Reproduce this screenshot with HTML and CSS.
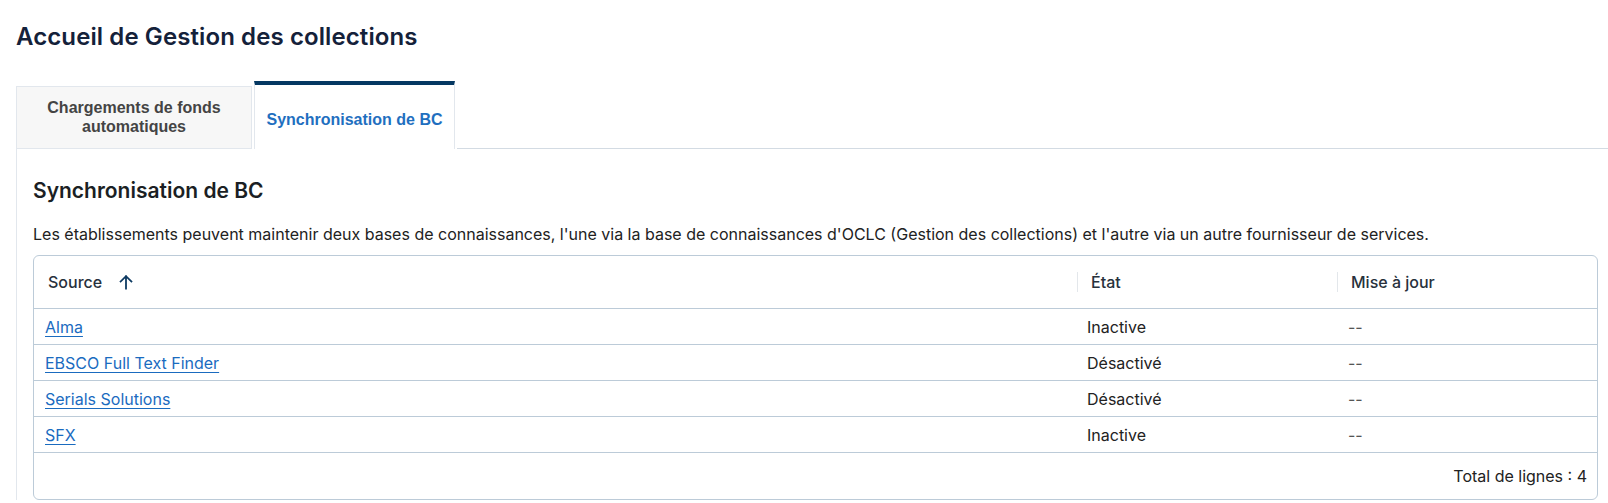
FILE: index.html
```html
<!DOCTYPE html>
<html lang="fr">
<head>
<meta charset="utf-8">
<title>Accueil de Gestion des collections</title>
<link rel="stylesheet" href="styles.css">
</head>
<body>
<div class="page">
  <h1 class="page-title">Accueil de Gestion des collections</h1>
  <div class="tabs">
    <div class="tab">Chargements de fonds<br>automatiques</div>
    <div class="tab tab-active">Synchronisation de BC</div>
    <div class="tabs-fill"></div>
  </div>
  <div class="panel">
    <h2 class="panel-title">Synchronisation de BC</h2>
    <p class="panel-text">Les établissements peuvent maintenir deux bases de connaissances, l'une via la base de connaissances d'OCLC (Gestion des collections) et l'autre via un autre fournisseur de services.</p>
    <div class="grid">
      <table class="grid-table">
        <colgroup>
          <col class="col-source">
          <col class="col-state">
          <col class="col-date">
        </colgroup>
        <thead>
          <tr>
            <th><div class="th-in th-first">Source
              <svg class="sort-icon" viewBox="0 0 16 16" width="16" height="16" aria-hidden="true"><path d="M8 14.5V2.2M2.6 7.6L8 2.2l5.4 5.4" fill="none" stroke="#0d3a62" stroke-width="1.8" stroke-linecap="square"/></svg>
            </div></th>
            <th><div class="th-in">État</div></th>
            <th><div class="th-in">Mise à jour</div></th>
          </tr>
        </thead>
        <tbody>
          <tr><td><a href="#">Alma</a></td><td>Inactive</td><td class="dash">--</td></tr>
          <tr><td><a href="#">EBSCO Full Text Finder</a></td><td>Désactivé</td><td class="dash">--</td></tr>
          <tr><td><a href="#">Serials Solutions</a></td><td>Désactivé</td><td class="dash">--</td></tr>
          <tr><td><a href="#">SFX</a></td><td>Inactive</td><td class="dash">--</td></tr>
        </tbody>
      </table>
      <div class="grid-footer">Total de lignes : 4</div>
    </div>
  </div>
</div>
</body>
</html>
```

FILE: styles.css
```css
html, body {
  margin: 0;
  padding: 0;
  background: #ffffff;
  overflow: hidden;
}

body {
  font-family: Inter, "Noto Sans", sans-serif;
  color: #222222;
}

.page {
  padding-left: 16px;
}

.page-title {
  margin: 21px 0 0 0;
  font-size: 24px;
  line-height: 32px;
  font-weight: 600;
  letter-spacing: 0.1px;
  color: #14213a;
}

.tabs {
  display: flex;
  align-items: flex-end;
  margin-top: 28px;
  gap: 2px;
}

.tab {
  box-sizing: border-box;
  height: 63px;
  width: 236px;
  display: flex;
  align-items: center;
  justify-content: center;
  text-align: center;
  font-family: "Liberation Sans", Arial, sans-serif;
  font-weight: 700;
  font-size: 16px;
  line-height: 19px;
  color: #444444;
  background: #f7f7f7;
  border: 1px solid #e2e7ed;
  padding-bottom: 2px;
}

.tab-active {
  width: 201px;
  height: 68px;
  background: #ffffff;
  color: #1f6fbf;
  border-top: 4px solid #053862;
  border-bottom: none;
  padding-top: 4px;
  padding-bottom: 0;
}

.tabs-fill {
  flex: 1;
  border-bottom: 1px solid #d3dbe3;
}

.panel {
  border-left: 1px solid #e2e7ed;
  padding: 28px 10px 0 16px;
}

.panel-title {
  margin: 0;
  font-size: 21px;
  line-height: 28px;
  font-weight: 600;
  color: #1b1f24;
}

.panel-text {
  margin: 17px 0 0 0;
  font-size: 16px;
  line-height: 24px;
  color: #222222;
}

.grid {
  margin-top: 9px;
  border: 1px solid #bccbd8;
  border-radius: 6px;
  overflow: hidden;
}

.grid-table {
  width: 100%;
  border-collapse: collapse;
  table-layout: fixed;
  font-size: 16px;
}

.col-source { width: 1043px; }
.col-state { width: 260px; }

.grid-table th {
  height: 52px;
  padding: 0;
  text-align: left;
  font-weight: 500;
  color: #27313c;
  border-bottom: 1px solid #bccbd8;
  vertical-align: middle;
}

.th-in {
  display: flex;
  align-items: center;
  height: 20px;
  line-height: 20px;
  border-left: 1px solid #e3e7eb;
  padding-left: 13px;
}

.th-first {
  border-left: none;
  padding-left: 14px;
}

.sort-icon {
  margin-left: 16px;
  display: block;
}

.grid-table td {
  height: 35px;
  padding: 0 0 0 11px;
  border-bottom: 1px solid #bccbd8;
  vertical-align: middle;
  color: #222222;
}

.grid-table td:nth-child(2) {
  padding-left: 10px;
}

.grid-table a {
  color: #1a6bbf;
  text-decoration: underline;
  text-underline-offset: 3px;
}

.grid-table td.dash {
  color: #555555;
}

.grid-footer {
  height: 46px;
  display: flex;
  align-items: center;
  justify-content: flex-end;
  padding-right: 10px;
  font-size: 16px;
  color: #222222;
}
```
